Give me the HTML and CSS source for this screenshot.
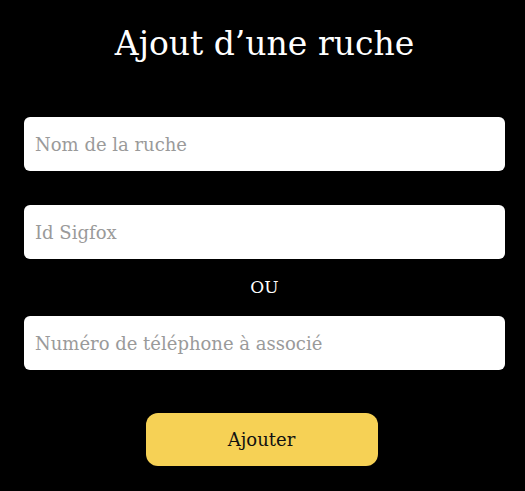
FILE: index.html
```html
<!DOCTYPE html>
<html lang="fr">
<head>
<meta charset="utf-8">
<title>Ajout d’une ruche</title>
<link rel="stylesheet" href="styles.css">
</head>
<body>
<main class="page">
  <h1 class="title">Ajout d’une ruche</h1>
  <form class="form">
    <input class="field" type="text" placeholder="Nom de la ruche">
    <input class="field field-sigfox" type="text" placeholder="Id Sigfox">
    <p class="or">OU</p>
    <input class="field" type="text" placeholder="Numéro de téléphone à associé">
    <button class="submit" type="button">Ajouter</button>
  </form>
</main>
</body>
</html>
```
FILE: styles.css
```css
html, body {
  margin: 0;
  background: #000;
}
body {
  font-family: "DejaVu Serif", "Liberation Serif", serif;
  color: #fff;
}
.page {
  padding: 22px 20px 0 24px;
}
.title {
  margin: 0;
  text-align: center;
  font-size: 33px;
  font-weight: normal;
  line-height: 44px;
}
.form {
  display: flex;
  flex-direction: column;
  align-items: center;
  margin-top: 51px;
}
.field {
  box-sizing: border-box;
  width: 100%;
  height: 54px;
  border: none;
  border-radius: 6px;
  background: #fff;
  padding: 0 11px;
  font-family: inherit;
  font-size: 18px;
  color: #222;
  outline: none;
}
.field::placeholder {
  color: #9a9a9a;
}
.field-sigfox {
  margin-top: 34px;
}
.or {
  margin: 0;
  height: 57px;
  line-height: 57px;
  font-size: 17px;
}
.submit {
  margin: 43px 6px 0 0;
  width: 232px;
  height: 53px;
  border: none;
  border-radius: 12px;
  background: #f6d155;
  color: #111;
  font-family: inherit;
  font-size: 18px;
}
```
